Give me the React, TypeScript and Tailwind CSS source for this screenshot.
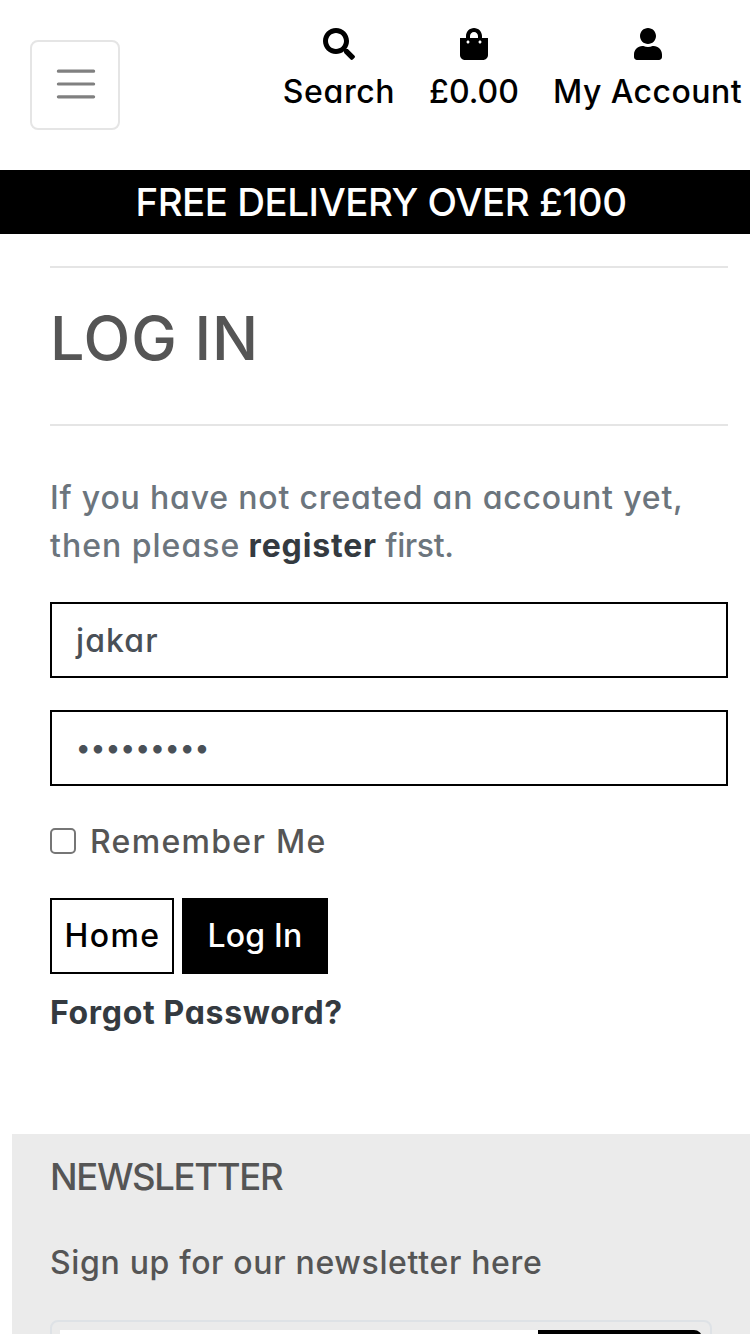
import type { ReactNode } from "react";
import { FaSearch, FaShoppingBag, FaUser } from "react-icons/fa";

function NavItem({ icon, label, className }: { icon: ReactNode; label: string; className: string }) {
  return (
    <a href="#" className={`flex flex-col items-center whitespace-nowrap text-black ${className}`}>
      <span className="h-8 text-[32px] leading-none">{icon}</span>
      <span className="mt-2 leading-[48px]">{label}</span>
    </a>
  );
}

export default function App() {
  return (
    <div className="flex h-[1334px] w-[750px] flex-col overflow-hidden bg-white font-[Inter,'Noto_Sans',sans-serif] text-[32px] leading-[48px] font-[450] text-[#555] [font-feature-settings:'cv11']">
      <header className="flex h-[170px] shrink-0">
        <button aria-label="Menu" className="mt-10 ml-[30px] flex h-[90px] w-[90px] shrink-0 rounded-[8px] border-2 border-[#e5e5e5] pt-[18px] pl-5">
          <svg viewBox="0 0 30 30" className="size-12" fill="none" stroke="#808080" strokeWidth="2" strokeLinecap="round" strokeMiterlimit="10">
            <path d="M4 7h22M4 15h22M4 23h22" />
          </svg>
        </button>
        <nav className="mt-7 ml-[161px] flex items-start">
          <NavItem icon={<FaSearch />} label="Search" className="w-[116px] tracking-[0.6px]" />
          <NavItem icon={<FaShoppingBag />} label="£0.00" className="ml-8 w-[90px] tracking-[0px]" />
          <NavItem icon={<FaUser />} label="My Account" className="ml-8 w-[193px] tracking-[0.45px]" />
        </nav>
      </header>

      <div className="flex h-16 shrink-0 items-center justify-center bg-black pl-3 text-[38.5px] font-medium tracking-[-0.5px] text-white">
        FREE DELIVERY OVER £100
      </div>

      <main className="ml-[50px] w-[678px] shrink-0">
        <div className="mt-8 flex h-[160px] items-center border-y-2 border-[#e5e5e5] pb-4">
          <h1 className="text-[61px] leading-[72px] font-medium tracking-[0.8px]">LOG IN</h1>
        </div>
        <form className="flex flex-col">
          <p className="mt-12 tracking-[0.82px] whitespace-nowrap text-[#6c757d]">
            If you have not created an account yet,
            <br />
            <span className="tracking-[1px]">then please</span>{" "}
            <a href="#" className="ml-[-1px] font-bold tracking-[0.85px] text-[#343a40]">register</a>{" "}
            <span className="ml-[-1px] tracking-[-0.4px]">first.</span>
          </p>
          <div className="mt-8 flex h-[76px] items-center border-2 border-black px-6 pt-[2px] tracking-[1.1px] text-[#495057]">jakar</div>
          <div className="mt-8 flex h-[76px] items-center border-2 border-black px-6 text-[27px] tracking-[0.45px] text-[#495057]">
            •••••••••
          </div>
          <label className="mt-[31px] flex h-12 items-center tracking-[1.3px]">
            <span className="size-[26px] rounded-[5px] border-2 border-[#767676] bg-white" />
            <span className="ml-[14px] pt-px">Remember Me</span>
          </label>
          <div className="mt-[33px] flex gap-2">
            <a href="#" className="flex h-[76px] w-[124px] items-center justify-center border-2 border-black pl-px tracking-[1.4px] text-black">Home</a>
            <button type="button" className="flex h-[76px] w-[146px] items-center justify-center bg-black font-medium tracking-[0.2px] text-white">Log In</button>
          </div>
          <a href="#" className="mt-[15px] font-bold tracking-[0.67px] text-[#343a40]">Forgot Password?</a>
        </form>
      </main>

      <footer className="mt-[97px] ml-3 h-[200px] shrink-0 bg-[#ebebeb] pl-[38px]">
        <h2 className="pt-[19px] text-[36.5px] font-medium tracking-[-1.35px]">NEWSLETTER</h2>
        <p className="mt-[38px] tracking-[0.66px]">Sign up for our newsletter here</p>
        <div className="mt-[33px] flex h-24 w-[662px] rounded-[8px] border-2 border-[#dee2e6] p-2">
          <div className="flex-1 bg-white" />
          <div className="w-[164px] rounded-r-[8px] bg-black" />
        </div>
      </footer>
    </div>
  );
}
